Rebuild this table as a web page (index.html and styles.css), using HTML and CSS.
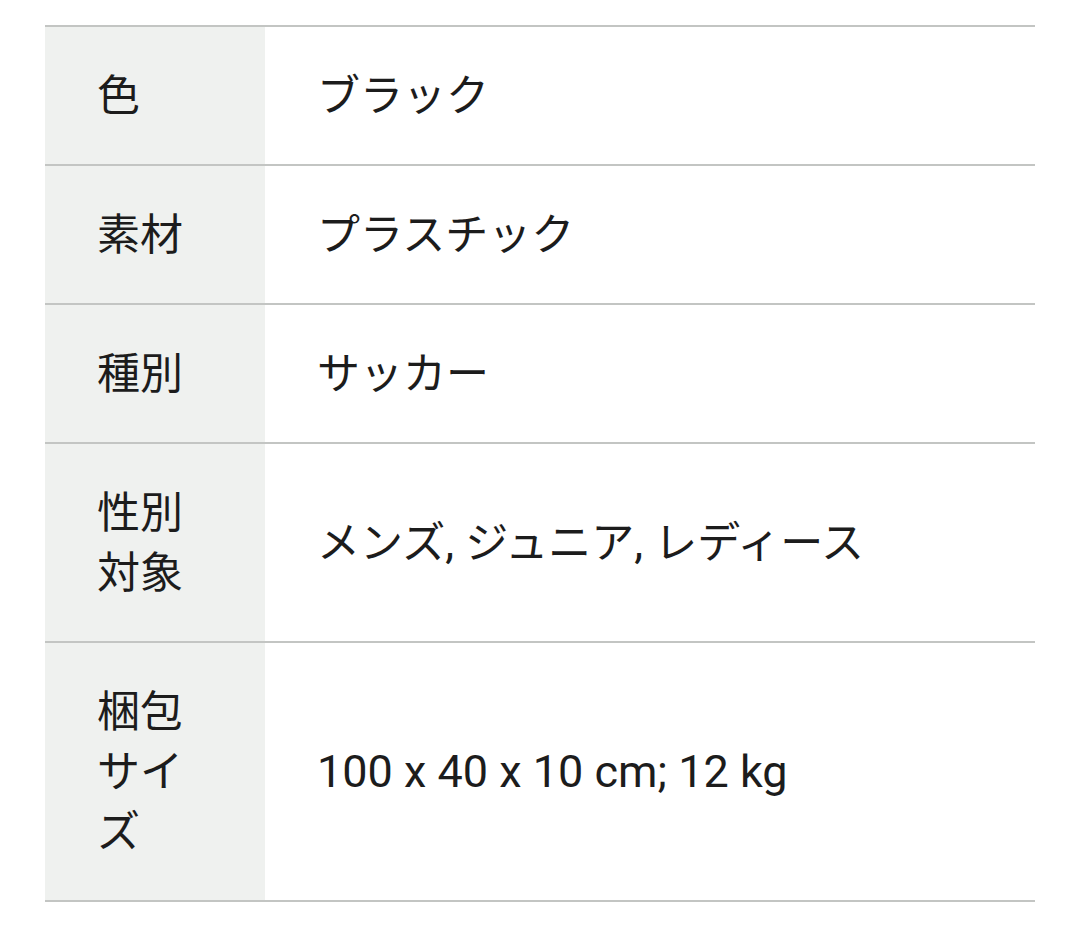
FILE: index.html
```html
<!DOCTYPE html>
<html lang="ja">
<head>
<meta charset="utf-8">
<link rel="stylesheet" href="styles.css">
</head>
<body>
<table class="spec">
  <tbody>
    <tr><th><span class="ja">色</span></th><td><span class="ja">ブラック</span></td></tr>
    <tr><th><span class="ja">素材</span></th><td><span class="ja">プラスチック</span></td></tr>
    <tr><th><span class="ja">種別</span></th><td><span class="ja">サッカー</span></td></tr>
    <tr><th><span class="ja">性別対象</span></th><td><span class="ja">メンズ</span>, <span class="ja">ジュニア</span>, <span class="ja">レディース</span></td></tr>
    <tr><th><span class="ja">梱包サイズ</span></th><td>100 x 40 x 10 cm; 12 kg</td></tr>
  </tbody>
</table>
</body>
</html>
```
FILE: styles.css
```css
html, body {
  margin: 0;
  padding: 0;
  background: #ffffff;
}
body {
  padding: 25px 45px 0 45px;
  font-family: Roboto, "Noto Sans CJK JP", sans-serif;
  color: #1c1c1c;
}
.spec {
  width: 990px;
  border-collapse: collapse;
  font-size: 45px;
  line-height: 60px;
}
.spec th,
.spec td {
  border-top: 2px solid #c3c5c3;
  border-bottom: 2px solid #c3c5c3;
  padding: 38.5px 0;
  vertical-align: middle;
  text-align: left;
  font-weight: normal;
}
.spec th {
  width: 116px;
  padding-left: 52px;
  padding-right: 52px;
  background: #eff1ef;
}
.spec td {
  padding-left: 52px;
}
.ja {
  font-family: "Noto Sans CJK JP", sans-serif;
  font-size: 43px;
  line-height: 0;
}
```
